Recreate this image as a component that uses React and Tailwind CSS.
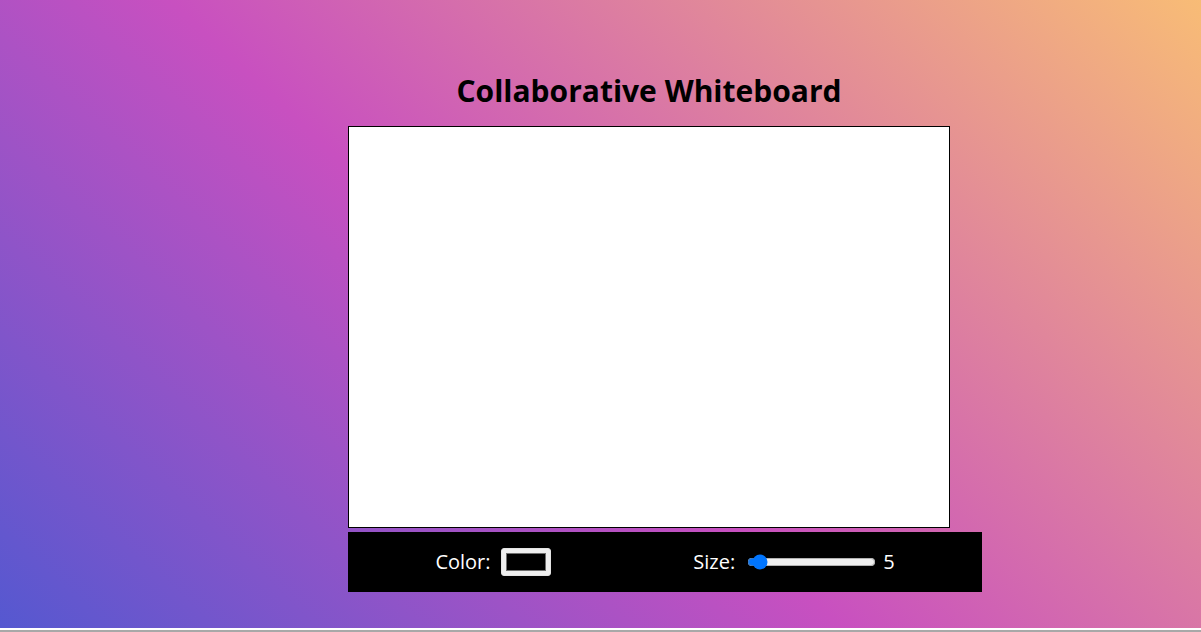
import React, { useState } from 'react';

export default function App() {
  const [color, setColor] = useState('#000000');
  const [size, setSize] = useState(5);

  return (
    <div className="bg-white">
      <div
        className="h-[628px] overflow-hidden bg-[linear-gradient(43deg,#5558d0_0%,#c850c0_45%,#f8bc76_100%)] font-['Open_Sans',sans-serif]"
      >
        <div className="ml-[348px] w-[602px] pt-[72px]">
          <h1 className="text-center text-[30px] font-bold leading-[38px] text-black mb-[16px]">
            Collaborative Whiteboard
          </h1>
          <canvas width="600" height="400" className="block w-[602px] h-[402px] bg-white border border-black" />
          <div className="mt-[4px] box-content w-full h-[60px] px-4 bg-black flex items-center justify-around text-white text-[20px]">
            <label className="flex items-center gap-[10px]">
              <span>Color:</span>
              <input
                type="color"
                value={color}
                onChange={e => setColor(e.target.value)}
                className="box-border w-[50px] h-[28px] p-0 bg-[#efefef] border border-[#e4e4e4] rounded-[3px] cursor-pointer [&::-webkit-color-swatch-wrapper]:p-[4px_4px] [&::-webkit-color-swatch]:border [&::-webkit-color-swatch]:border-[#6f6f6f] [&::-webkit-color-swatch]:rounded-none"
              />
            </label>
            <label className="flex items-center gap-[10px]">
              <span>Size:</span>
              <input
                type="range"
                min="1"
                max="100"
                value={size}
                onChange={e => setSize(Number(e.target.value))}
                className="w-[129px] ml-[2px]"
              />
              <span className="-ml-[3px]">{size}</span>
            </label>
          </div>
        </div>
      </div>
      <div className="h-[2px] bg-white" />
      <div className="h-[2px] bg-[#a8a8a8]" />
    </div>
  );
}
